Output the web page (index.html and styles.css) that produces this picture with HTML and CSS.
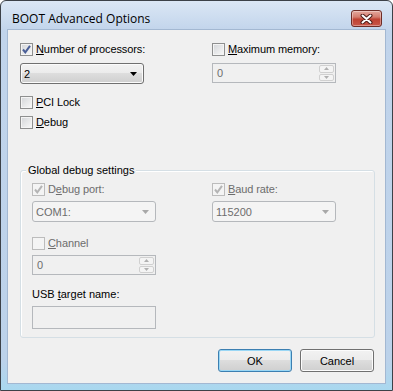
FILE: index.html
```html
<!DOCTYPE html>
<html lang="en">

<head>
    <meta charset="UTF-8">
    <title>BOOT Advanced Options</title>
    <link rel="stylesheet" href="styles.css">
</head>

<body>
    <div class="window">
        <div class="titlebar">
            <span class="title">BOOT Advanced Options</span>
            <button class="close" aria-label="Close">
                <svg width="13" height="10" viewBox="0 0 13 10">
                    <path d="M2.5 1.5 L10.5 8.5 M10.5 1.5 L2.5 8.5" stroke="#4a1a16" stroke-width="4" stroke-linecap="round" fill="none"/>
                    <path d="M2.5 1.5 L10.5 8.5 M10.5 1.5 L2.5 8.5" stroke="#ffffff" stroke-width="2" stroke-linecap="round" fill="none"/>
                </svg>
            </button>
        </div>

        <div class="client">
            <div class="cols">
                <div class="col">
                    <label class="check">
                        <span class="box"><svg class="tick" viewBox="0 0 13 13"><path d="M3 6.5 L5.3 9.3 L10 2.8"/></svg></span>
                        <span><u>N</u>umber of processors:</span>
                    </label>
                    <div class="combo combo-top">
                        <span>2</span>
                        <svg class="arrow" width="7" height="4" viewBox="0 0 7 4"><path d="M0 0 H7 L3.5 4 Z"/></svg>
                    </div>
                    <label class="check pci">
                        <span class="box"></span>
                        <span><u>P</u>CI Lock</span>
                    </label>
                    <label class="check debug">
                        <span class="box"></span>
                        <span><u>D</u>ebug</span>
                    </label>
                </div>
                <div class="col">
                    <label class="check">
                        <span class="box"></span>
                        <span><u>M</u>aximum memory:</span>
                    </label>
                    <div class="spin disabled combo-top">
                        <span>0</span>
                        <span class="spin-btns">
                            <span class="spin-btn"><svg width="5" height="3" viewBox="0 0 5 3"><path d="M0 3 H5 L2.5 0 Z"/></svg></span>
                            <span class="spin-btn"><svg width="5" height="3" viewBox="0 0 5 3"><path d="M0 0 H5 L2.5 3 Z"/></svg></span>
                        </span>
                    </div>
                </div>
            </div>

            <div class="group">
                <span class="group-title">Global debug settings</span>
                <div class="group-cols">
                    <div class="col">
                        <label class="check disabled">
                            <span class="box"><svg class="tick" viewBox="0 0 13 13"><path d="M3 6.5 L5.3 9.3 L10 2.8"/></svg></span>
                            <span>D<u>e</u>bug port:</span>
                        </label>
                        <div class="combo disabled inner-top">
                            <span>COM1:</span>
                            <svg class="arrow" width="7" height="4" viewBox="0 0 7 4"><path d="M0 0 H7 L3.5 4 Z"/></svg>
                        </div>
                        <label class="check disabled channel">
                            <span class="box"></span>
                            <span><u>C</u>hannel</span>
                        </label>
                        <div class="spin disabled inner-top">
                            <span>0</span>
                            <span class="spin-btns">
                                <span class="spin-btn"><svg width="5" height="3" viewBox="0 0 5 3"><path d="M0 3 H5 L2.5 0 Z"/></svg></span>
                                <span class="spin-btn"><svg width="5" height="3" viewBox="0 0 5 3"><path d="M0 0 H5 L2.5 3 Z"/></svg></span>
                            </span>
                        </div>
                        <div class="field-label">USB <u>t</u>arget name:</div>
                        <div class="textbox"></div>
                    </div>
                    <div class="col">
                        <label class="check disabled">
                            <span class="box"><svg class="tick" viewBox="0 0 13 13"><path d="M3 6.5 L5.3 9.3 L10 2.8"/></svg></span>
                            <span><u>B</u>aud rate:</span>
                        </label>
                        <div class="combo disabled inner-top">
                            <span>115200</span>
                            <svg class="arrow" width="7" height="4" viewBox="0 0 7 4"><path d="M0 0 H7 L3.5 4 Z"/></svg>
                        </div>
                    </div>
                </div>
            </div>

            <div class="buttons">
                <button class="btn btn-default">OK</button>
                <button class="btn">Cancel</button>
            </div>
        </div>
    </div>
</body>

</html>
```

FILE: styles.css
```css
:root {
    --face: #f0f0f0;
    --text: #000000;
    --text-disabled: #6d6d6d;
    --frame-top: #dbe7f5;
    --frame: #c1d4eb;
    --frame-edge: #3c4148;
    --ctl-border: #707070;
    --ctl-border-disabled: #b5b8bc;
    --check-enabled: #4a5f97;
    --check-disabled: #b4b4b4;
    --font-ui: "Liberation Sans", Arial, sans-serif;
    --font-title: "Open Sans", "Noto Sans", sans-serif;
}

* {
    box-sizing: border-box;
}

body {
    margin: 0;
    background: #ffffff;
    font-family: var(--font-ui);
    font-size: 11px;
    color: var(--text);
}

.window {
    width: 393px;
    height: 391px;
    border: 1px solid var(--frame-edge);
    border-radius: 6px 6px 0 0;
    background: linear-gradient(var(--frame-top), var(--frame) 30px, #bcd2ea 360px, #a9d8ef);
    padding: 0 6px 6px;
    display: flex;
    flex-direction: column;
}

/* Title bar */
.titlebar {
    height: 28px;
    padding: 7px 4px 0 5px;
    display: flex;
    align-items: center;
    justify-content: space-between;
}

.title {
    font-family: var(--font-title);
    font-size: 12px;
    color: #000000;
}

.close {
    width: 31px;
    height: 17px;
    padding: 0;
    border: 1px solid #6e2c26;
    border-radius: 3px;
    background: linear-gradient(#e4a89d, #d47d6f 40%, #bf4232 55%, #c9574a);
    box-shadow: inset 0 0 0 1px rgba(255, 255, 255, 0.35);
    display: flex;
    align-items: center;
    justify-content: center;
}

/* Client area */
.client {
    flex: 1;
    background: var(--face);
    border: 1px solid #a3b8d2;
    padding: 13px 11px 0 12px;
    display: flex;
    flex-direction: column;
}

.cols {
    display: flex;
}

.cols > .col:first-child {
    width: 192px;
}

.col {
    display: flex;
    flex-direction: column;
    align-items: flex-start;
    width: 124px;
}

/* Checkboxes */
.check {
    display: flex;
    align-items: center;
    gap: 3px;
    height: 13px;
    line-height: 13px;
    white-space: nowrap;
    letter-spacing: -0.1px;
}

.box {
    width: 13px;
    height: 13px;
    flex: none;
    border: 1px solid #8e8f8f;
    background: linear-gradient(135deg, #d3d5d8, #f9f9f9);
    box-shadow: inset 0 0 0 1px #f4f4f4;
    position: relative;
}

.tick {
    position: absolute;
    left: -1px;
    top: -1px;
    width: 13px;
    height: 13px;
    fill: none;
    stroke: var(--check-enabled);
    stroke-width: 2;
}

.check.disabled {
    color: var(--text-disabled);
}

.check.disabled .box {
    border-color: #bcbcbc;
    background: #f4f4f4;
    box-shadow: none;
}

.check.disabled .tick {
    stroke: var(--check-disabled);
}

.pci {
    margin-top: 12px;
}

.debug {
    margin-top: 7px;
}

/* Combo boxes */
.combo {
    width: 124px;
    height: 21px;
    border: 1px solid var(--ctl-border);
    border-radius: 3px;
    background: linear-gradient(#f2f2f2, #ebebeb 50%, #dddddd 50%, #cfcfcf);
    box-shadow: inset 0 0 0 1px #fbfbfb;
    padding: 0 6px 0 3px;
    display: flex;
    align-items: center;
    justify-content: space-between;
}

.combo .arrow {
    fill: #000000;
}

.combo.disabled {
    border-color: var(--ctl-border-disabled);
    background: #f4f4f4;
    box-shadow: none;
    color: var(--text-disabled);
}

.combo.disabled .arrow {
    fill: #a8a8a8;
}

.combo-top {
    margin-top: 7px;
}

/* Spin boxes */
.spin {
    width: 124px;
    height: 20px;
    border: 1px solid var(--ctl-border-disabled);
    background: var(--face);
    color: var(--text-disabled);
    padding: 1px 1px 1px 4px;
    display: flex;
    align-items: center;
    justify-content: space-between;
}

.spin-btns {
    width: 15px;
    height: 100%;
    display: flex;
    flex-direction: column;
    gap: 1px;
}

.spin-btn {
    flex: 1;
    border: 1px solid #d0d0d0;
    border-radius: 2px;
    background: #f4f4f4;
    display: flex;
    align-items: center;
    justify-content: center;
    fill: #b0b0b0;
}

/* Group box */
.group {
    margin-top: 41px;
    width: 355px;
    height: 168px;
    border: 1px solid #d5dfe5;
    border-radius: 3px;
    box-shadow: inset 1px 1px 0 #ffffff;
    padding: 12px 0 0 11px;
    position: relative;
}

.group-title {
    position: absolute;
    top: -7px;
    left: 5px;
    padding: 0 2px;
    line-height: 13px;
    background: var(--face);
}

.group-cols {
    display: flex;
}

.group-cols > .col:first-child {
    width: 180px;
}

.inner-top {
    margin-top: 5px;
}

.channel {
    margin-top: 15px;
}

.field-label {
    margin-top: 13px;
    height: 13px;
    line-height: 13px;
}

.textbox {
    width: 124px;
    margin-top: 5px;
    height: 23px;
    border: 1px solid #b5b8bc;
    background: var(--face);
}

/* Dialog buttons */
.buttons {
    margin-top: 11px;
    display: flex;
    justify-content: flex-end;
    gap: 8px;
}

.btn {
    width: 74px;
    height: 23px;
    padding: 0;
    font-family: var(--font-ui);
    font-size: 11px;
    color: #000000;
    border: 1px solid var(--ctl-border);
    border-radius: 3px;
    background: linear-gradient(#f2f2f2, #ebebeb 50%, #dddddd 50%, #cfcfcf);
    box-shadow: inset 0 0 0 1px #fcfcfc;
}

.btn-default {
    border-color: #3c7fb1;
    box-shadow: inset 0 0 0 1px #9ad7f5;
}
```
